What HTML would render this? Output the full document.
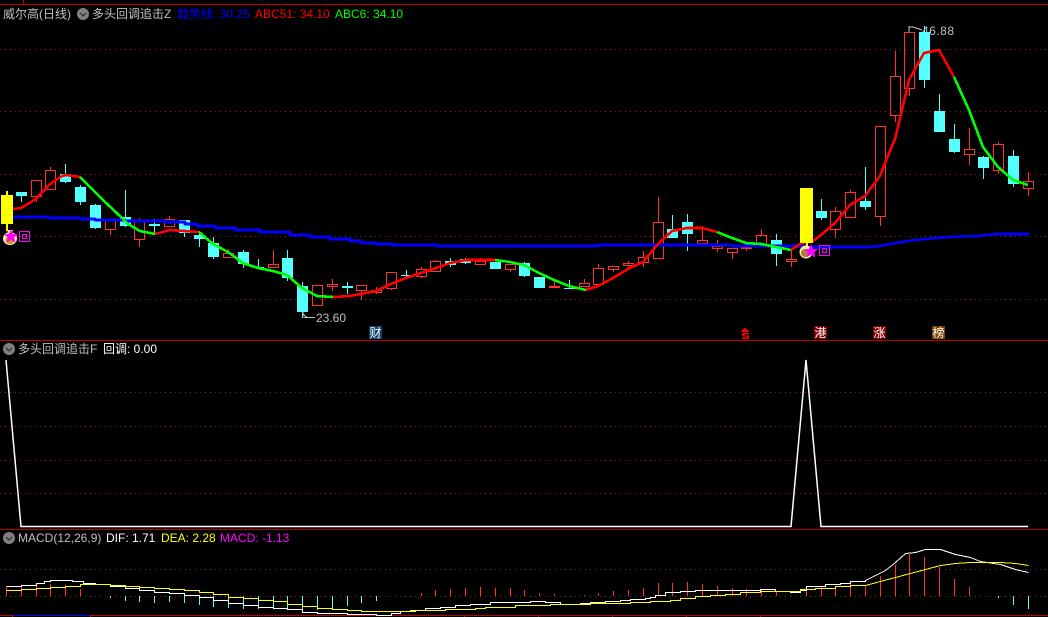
<!DOCTYPE html>
<html><head><meta charset="utf-8">
<style>
html,body{margin:0;padding:0;background:#000;width:1048px;height:617px;overflow:hidden}
#w{position:relative;width:1048px;height:617px;background:#000;overflow:hidden}
svg{position:absolute;left:0;top:0}
.t{position:absolute;white-space:pre;font:12px/14px "Liberation Sans","WenQuanYi Zen Hei",sans-serif;color:#c0c0c0}
.b{position:absolute;width:13px;height:13px;color:#fff;text-align:center;font:12px/13px "WenQuanYi Zen Hei","Noto Sans CJK SC",sans-serif}
</style></head><body><div id="w">
<svg width="1048" height="617" viewBox="0 0 1048 617" xmlns="http://www.w3.org/2000/svg">
<g shape-rendering="crispEdges" fill="none">
<path stroke="#c00000" d="M0 4.5H1048M23.5 0V4M0 340.5H1048M0 529.5H1048M0 615.5H1048M12.5 615V617M90.5 615V617M464.5 615V617M538.5 615V617M612.5 615V617M686.5 615V617M760.5 615V617"/>
<path stroke="#0000ff" d="M13 615.5H90"/>
<path stroke="#8a2020" stroke-dasharray="1 4" d="M0 49.5H1048M0 111.5H1048M0 174.5H1048M0 236.5H1048M0 299.5H1048M0 392.5H1048M0 426.5H1048M0 460.5H1048M0 493.5H1048M0 569.5H1048M0 596.5H1048"/>
</g>
<text x="922" y="35" fill="#c0c0c0" font-family="Liberation Sans" font-size="12" textLength="32">46.88</text>
<path d="M909 26V33M909 27H913L922 30" stroke="#c0c0c0" fill="none" shape-rendering="crispEdges"/>
<g shape-rendering="crispEdges">
<path fill="none" stroke="#ff3232" d="M31.5 180.5h10V196.5h-10zM36.5 197V202M45.5 170.5h10V189.5h-10zM50.5 167V170M105.5 220.5h10V229.5h-10zM110.5 230V235M134.5 221.5h10V239.5h-10zM139.5 218V221M139.5 240V247M164.5 219.5h10V226.5h-10zM169.5 216V219M223.5 253.5h10V257.5h-10zM228.5 249V253M268.5 264.5h10V267.5h-10zM273.5 250V264M312.5 285.5h10V305.5h-10zM327.5 284.5h10V286.5h-10zM332.5 279V284M332.5 287V291M356.5 285.5h10V290.5h-10zM361.5 291V300M371.5 290.5h10V292.5h-10zM376.5 287V290M376.5 293V294M386.5 272.5h10V288.5h-10zM391.5 289V290M416.5 269.5h10V276.5h-10zM421.5 267V269M421.5 277V278M430.5 261.5h10V271.5h-10zM435.5 260V261M475.5 261.5h10V264.5h-10zM480.5 258V261M505.5 264.5h10V269.5h-10zM510.5 270V272M549.5 286.5h10V287.5h-10zM554.5 279V286M579.5 283.5h10V286.5h-10zM584.5 279V283M593.5 268.5h10V284.5h-10zM598.5 264V268M608.5 266.5h10V269.5h-10zM613.5 270V272M623.5 263.5h10V265.5h-10zM628.5 261V263M628.5 266V270M638.5 257.5h10V262.5h-10zM643.5 251V257M643.5 263V267M653.5 222.5h10V258.5h-10zM658.5 197V222M697.5 240.5h10V243.5h-10zM702.5 226V240M712.5 246.5h10V248.5h-10zM717.5 240V246M717.5 249V252M727.5 248.5h10V252.5h-10zM732.5 253V259M741.5 247.5h10V248.5h-10zM746.5 249V251M756.5 235.5h10V244.5h-10zM761.5 229V235M786.5 259.5h10V261.5h-10zM791.5 250V259M791.5 262V267M830.5 211.5h10V229.5h-10zM835.5 207V211M835.5 230V238M845.5 192.5h10V217.5h-10zM850.5 190V192M875.5 126.5h10V216.5h-10zM880.5 217V226M890.5 76.5h10V115.5h-10zM895.5 51V76M895.5 116V122M904.5 32.5h10V88.5h-10zM909.5 89V96M964.5 149.5h10V154.5h-10zM969.5 128V149M969.5 155V165M993.5 144.5h10V170.5h-10zM998.5 142V144M998.5 171V174M1023.5 181.5h10V188.5h-10zM1028.5 172V181M1028.5 189V196"/>
<path fill="none" stroke="#54ffff" d="M21.5 196V202M65.5 164V183M80.5 185V205M95.5 204V229M125.5 190V227M154.5 219V234M184.5 233V237M199.5 231V247M213.5 237V259M243.5 250V268M258.5 259V268M287.5 250V281M302.5 282V318M347.5 282V294M406.5 270V278M450.5 258V267M465.5 258V264M524.5 262V277M569.5 280V289M672.5 215V238M687.5 214V251M776.5 234V266M821.5 199V220M865.5 167V210M924.5 26V88M939.5 94V111M954.5 124V153M983.5 156V179M1013.5 150V187"/>
<path fill="#54ffff" d="M16 192h11V196h-11zM60 174h11V182h-11zM75 187h11V202h-11zM90 205h11V228h-11zM120 217h11V226h-11zM149 224h11V226h-11zM179 220h11V233h-11zM194 235h11V239h-11zM208 243h11V257h-11zM238 252h11V264h-11zM253 267h11V268h-11zM282 258h11V278h-11zM297 286h11V312h-11zM342 286h11V288h-11zM401 275h11V276h-11zM445 261h11V265h-11zM460 259h11V263h-11zM490 262h11V269h-11zM519 263h11V276h-11zM534 277h11V288h-11zM564 288h11V289h-11zM667 229h11V238h-11zM682 222h11V234h-11zM771 240h11V254h-11zM816 211h11V218h-11zM860 201h11V207h-11zM919 32h11V80h-11zM934 111h11V132h-11zM949 139h11V152h-11zM978 157h11V168h-11zM1008 156h11V184h-11z"/>
</g>
<g fill="none" stroke-width="2.6" stroke-linejoin="round" shape-rendering="crispEdges">
<path stroke="#0000ff" d="M13 217H50V218H80V219H95V220H125V221H165V222H185V224H197V226H215V228H235V230H260V232H290V235H310V237H330V239H350V241H361V243H376V244H392V245H436V246H554V246H598V245H732V246H806V247H868L880 246L895 243L915 240L935 238L950 237L975 236L1000 234H1029"/>
<path stroke="#ff0000" d="M13 209L21 208L36 199L50 184L62 176L66 175L80 177M155 234L170 230L199 232M333 297L350 296L376 291L391 284L406 278L421 273L436 268L450 263L466 260L480 260L495 260M586 290L598 286L613 278L628 269L643 262L658 244L672 231L687 228L702 228L717 232M791 250L800 244L813 241L821 235L835 223L850 205L865 196L880 176L887 158L895 139L902 110L909 80L924 53L939 50L954 77"/>
<path stroke="#00ff00" d="M80 177L103 200L122 218L128 224L140 231L155 234M199 232L213 244L228 252L243 263L258 268L273 271L287 275L302 288L317 296L333 297M495 260L510 262L524 265L539 273L554 280L569 286L586 290M717 232L732 238L746 243L761 244L776 247L791 250M954 77L969 110L983 147L998 167L1013 180L1028 185"/>
</g>
<g shape-rendering="crispEdges">
<path fill="#ffff00" d="M1 195h12V224H1zM6 191h2V231H6zM800 188h13V243H800zM806 243h2V246h-2z"/>
<path fill="none" stroke="#ff00ff" d="M19.500 231.500h10V241.500h-10zM22.500 234.500h4V238.500h-4zM819.500 245.500h10V255.500h-10zM822.500 248.500h4V252.500h-4z"/>
</g>
<ellipse cx="10" cy="238.500" rx="7" ry="6.500" fill="#ffe9a8"/><ellipse cx="10" cy="240" rx="4.500" ry="4" fill="#c89a30"/><path d="M7 230h6l-1 3H8z" fill="#ffe08a"/>
<ellipse cx="806" cy="252" rx="6.500" ry="6.500" fill="#ffe9a8"/><ellipse cx="805" cy="253" rx="4" ry="4" fill="#a8842c"/>
<path fill="#ff00ff" d="M11 229L13 234L18 234.300L14.200 237.500L15.500 242.500L11 239.800L6.500 242.500L7.800 237.500L4 234.300L9 234Z"/>
<path fill="#ff00ff" d="M811 244L813 249L818 249.300L814.200 252.500L815.500 257.500L811 254.800L806.500 257.500L807.800 252.500L804 249.300L809 249Z"/>
<path d="M303 312V316M303 314L307 317.500M303.500 317.500H315" stroke="#c0c0c0" fill="none" shape-rendering="crispEdges"/>
<path fill="none" stroke="#fff" stroke-width="1.500" d="M6 360L21 526.500H791L806 360L821 526.500H1028"/>
<g fill="none" shape-rendering="crispEdges">
<path stroke="#ff3232" d="M6.500 586V596M21.500 587V596M36.500 586V596M50.500 584V596M65.500 585V596M80.500 589V596M421.500 593V596M435.500 590V596M450.500 589V596M465.500 588V596M480.500 587V596M495.500 588V596M510.500 588V596M524.500 590V596M539.500 593V596M554.500 594V596M584.500 595V596M598.500 593V596M613.500 591V596M628.500 590V596M643.500 588V596M658.500 583V596M672.500 583V596M687.500 582V596M702.500 584V596M717.500 586V596M732.500 588V596M746.500 589V596M761.500 589V596M776.500 592V596M806.500 587V596M821.500 587V596M835.500 586V596M850.500 584V596M865.500 586V596M880.500 576V596M895.500 565V596M909.500 554V596M924.500 557V596M939.500 567V596M954.500 579V596M969.500 587V596"/>
<path stroke="#54ffff" d="M110.500 596V598M125.500 596V601M139.500 596V602M154.500 596V603M169.500 596V602M184.500 596V603M199.500 596V605M213.500 596V607M228.500 596V608M243.500 596V609M258.500 596V609M273.500 596V608M287.500 596V609M302.500 596V611M317.500 596V610M332.500 596V608M347.500 596V606M361.500 596V603M376.500 596V601M998.500 596V598M1013.500 596V605M1028.500 596V609"/>
<g transform="translate(0.5 0.5)">
<path stroke="#ffffff" d="M6 586H21V585H36V583H44V581H50V580H72V581H83V583H95V584H110V586H125V588H139V590H154V592H169V593H184V595H199V597H213V600H228V603H243V605H258V607H273V608H287V609H302V612H317V613H347V614H376V615H391V613H400V611H410V610H425V608H440V607H455V605H470V604H490V602H530V601H545V602H560V604H580V603H590V602H605V601H620V600H630V599H645V598H650V597H655V595H665V592H680V591H695V590H760V589H775V591H790V592H800V590H806V586H825V584H840V583H850V581H865V580L875 575L885 570L895 562L905 553L915 552L925 549H940L955 554L970 557L980 561L1000 564L1015 569L1028 572"/>
<path stroke="#ffff00" d="M6 590H21V589H36V588H50V587H65V586H80V584H110V585H125V586H139V587H154V588H169V589H184V590H199V592H213V594H228V597H243V598H258V600H273V601H287V604H302V606H317V608H332V609H347V610H361V611H415V610H445V609H475V608H485V607H515V605H550V604H590V603H630V602H650V601H670V600H680V598H695V596H710V595H725V594H740V592H760V591H800V589H815V588H835V586H850V585H865L880 581L895 577L910 573L925 569L940 565L955 563L970 562H1000L1015 563L1028 565"/>
</g>
</g>
<g><circle cx="83" cy="14" r="6" fill="#808080"/><path d="M80 13L83 16L86 13" stroke="#222" fill="none"/>
<circle cx="9" cy="349" r="6" fill="#808080"/><path d="M6 348L9 351L12 348" stroke="#222" fill="none"/>
<circle cx="9" cy="538" r="6" fill="#808080"/><path d="M6 537L9 540L12 537" stroke="#222" fill="none"/></g>
<path fill="#f00000" shape-rendering="crispEdges" d="M744 328h2v1h1v1h1v1h1v1h-8v-1h1v-1h1v-1h1zM742 333h7v1.500h-5v1h5v3.500h-7v-1.500h5v-1h-5z"/>
</svg>
<div class="t" style="left:3px;top:7px">威尔高(日线)</div>
<div class="t" style="left:92px;top:7px">多头回调追击Z</div>
<div class="t" style="left:177px;top:7px;color:#0000ff">趋势线: 30.25</div>
<div class="t" style="left:255px;top:7px;color:#ff0000">ABC51: 34.10</div>
<div class="t" style="left:335px;top:7px;color:#00ff00">ABC6: 34.10</div>
<div class="t" style="left:316px;top:311px">23.60</div>
<div class="t" style="left:18px;top:342px">多头回调追击F</div>
<div class="t" style="left:103px;top:342px;color:#fff">回调: 0.00</div>
<div class="t" style="left:18px;top:531px">MACD(12,26,9)</div>
<div class="t" style="left:106px;top:531px;color:#fff">DIF: 1.71</div>
<div class="t" style="left:161px;top:531px;color:#ffff00">DEA: 2.28</div>
<div class="t" style="left:220px;top:531px;color:#ff00ff">MACD: -1.13</div>
<div class="b" style="left:369px;top:326px;background:#104070">财</div>
<div class="b" style="left:814px;top:326px;background:#800000">港</div>
<div class="b" style="left:873px;top:326px;background:#800000">涨</div>
<div class="b" style="left:932px;top:326px;background:#804000">榜</div>
</div></body></html>
